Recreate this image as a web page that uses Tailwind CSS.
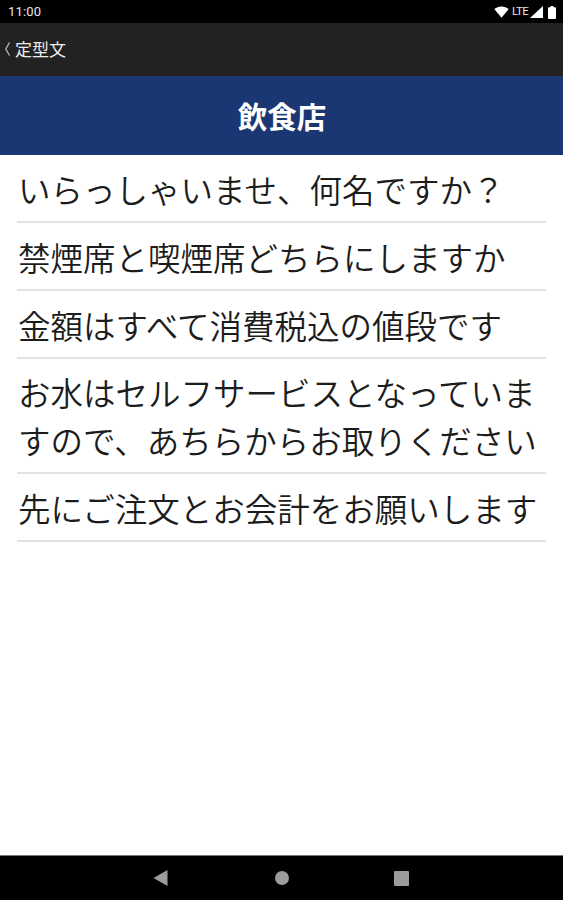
<!DOCTYPE html>
<html lang="ja">
<head>
  <meta charset="UTF-8">
  <meta name="viewport" content="width=device-width, initial-scale=1.0">
  <title>定型文</title>
  <script src="https://cdn.jsdelivr.net/npm/@tailwindcss/browser@4"></script>
</head>
<body class="bg-white font-['Noto_Sans_CJK_JP',sans-serif]">
  <div class="flex h-[900px] w-[563px] flex-col overflow-hidden">

    <!-- Status bar -->
    <div class="flex h-[23px] shrink-0 items-center justify-between bg-black pt-px pr-[7px] pl-2 text-[#e6e6e6]">
      <span class="font-[Roboto,sans-serif] text-[13px] tracking-[0.2px]">11:00</span>
      <div class="flex items-center">
        <svg class="h-3 w-[15px]" viewBox="0 0 15 12" fill="#fff"><path d="M0.3 3.1C4.4-0.5 10.6-0.5 14.7 3.1L7.5 11.8z"/></svg>
        <span class="ml-[3px] w-[17px] font-[Roboto,sans-serif] text-[11.500px] tracking-[-0.6px]">LTE</span>
        <svg class="ml-px h-3 w-[13px]" viewBox="0 0 13 12" fill="#fff"><path d="M13 0v12H0z"/></svg>
        <svg class="ml-[5px] h-[13px] w-2" viewBox="0 0 8 13" fill="#fff"><path d="M2.500 0h3v1.300H7q1 0 1 1V12q0 1-1 1H1q-1 0-1-1V2.300q0-1 1-1h1.500z"/></svg>
      </div>
    </div>

    <!-- Navigation -->
    <div class="flex h-[53px] shrink-0 items-center bg-[#222] pb-px pl-1 text-[#ececec]">
      <svg class="h-[14px] w-[7px]" viewBox="0 0 7 14" fill="none" stroke="#aaa" stroke-width="1.500"><path d="M5.500 0.500L1.800 7l3.700 6.500"/></svg>
      <span class="ml-[4px] text-[17px] leading-6">定型文</span>
    </div>

    <h1 class="flex h-[79px] shrink-0 items-center justify-center bg-[#1a3673] pl-px text-[29.500px] font-bold text-white">飲食店</h1>

    <ul class="ml-[17px] w-[529px] flex-1 text-[32.500px] leading-[47.500px] font-[350] text-[#1c1c1c]">
      <li class="h-[68px] border-b-2 border-[#e2e2e2] pt-[10px] pl-px">いらっしゃいませ、何名ですか？</li>
      <li class="h-[68px] border-b-2 border-[#e2e2e2] pt-[10px] pl-px">禁煙席と喫煙席どちらにしますか</li>
      <li class="h-[68px] border-b-2 border-[#e2e2e2] pt-[10px] pl-px">金額はすべて消費税込の値段です</li>
      <li class="h-[115px] border-b-2 border-[#e2e2e2] pt-[9px] pl-px">お水はセルフサービスとなっていますので、あちらからお取りください</li>
      <li class="h-[68px] border-b-2 border-[#e2e2e2] pt-[10px] pl-px">先にご注文とお会計をお願いします</li>
    </ul>

    <!-- Android buttons -->
    <div class="flex h-[45px] shrink-0 items-center border-t border-[#777] bg-black pl-[153px]">
      <svg class="h-4 w-[15px]" viewBox="0 0 15 16" fill="#9c9c9c"><path d="M14.500 0v16L0.500 8z"/></svg>
      <div class="ml-[107px] size-[14px] rounded-full bg-[#9c9c9c]"></div>
      <div class="ml-[105px] size-[15px] rounded-[1px] bg-[#9c9c9c]"></div>
    </div>

  </div>
</body>
</html>
